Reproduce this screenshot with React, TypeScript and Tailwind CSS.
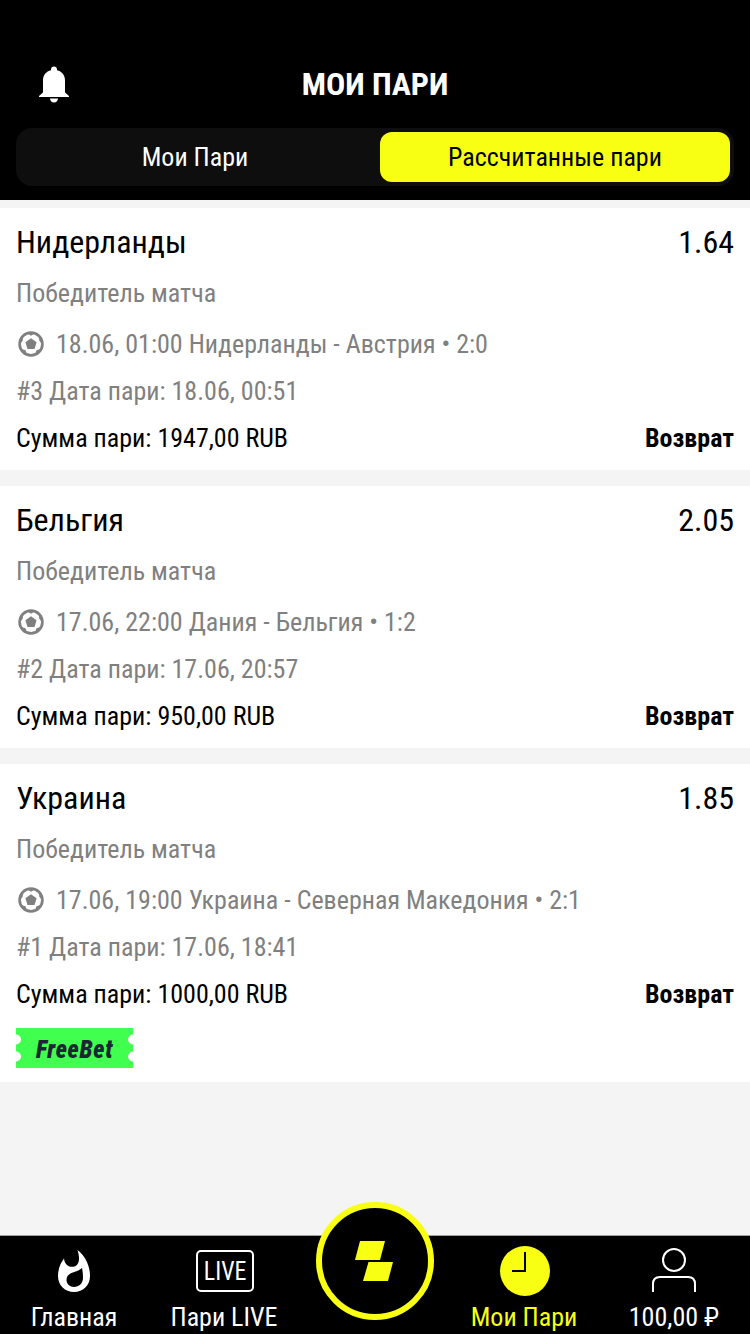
import React from "react";

type Bet = {
  id: number;
  pick: string;
  odds: string;
  event: string;
  placed: string;
  stake: string;
  freeBet?: boolean;
};

const bets: Bet[] = [
  { id: 3, pick: "Нидерланды", odds: "1.64", event: "18.06, 01:00 Нидерланды - Австрия • 2:0", placed: "18.06, 00:51", stake: "1947,00 RUB" },
  { id: 2, pick: "Бельгия", odds: "2.05", event: "17.06, 22:00 Дания - Бельгия • 1:2", placed: "17.06, 20:57", stake: "950,00 RUB" },
  { id: 1, pick: "Украина", odds: "1.85", event: "17.06, 19:00 Украина - Северная Македония • 2:1", placed: "17.06, 18:41", stake: "1000,00 RUB", freeBet: true },
];

function BellIcon() {
  return (
    <svg width="32" height="38" viewBox="0 0 32 38" fill="#fff">
      <path d="M16 .5c-1.800 0-3 1.200-3 3v.8C8 5.500 5 9.300 5 14.500v11.200c0 .6-.2 1-.6 1.300L1 30v1h30v-1l-3.400-3c-.4-.3-.6-.7-.6-1.300V14.500C27 9.300 24 5.500 19 4.300v-.8c0-1.800-1.200-3-3-3z" />
      <path d="M12 32.500h8c-.2 2.400-1.800 4-4 4s-3.800-1.600-4-4z" />
    </svg>
  );
}

function BallIcon() {
  return (
    <svg width="26" height="26" viewBox="0 0 26 26">
      <circle cx="13" cy="13" r="11.400" fill="none" stroke="#808080" strokeWidth="2.700" />
      <path d="M13 7.200l5.600 4.100-2.100 6.600H9.500L7.400 11.300z" fill="#808080" />
      <path d="M8.500 1.700L13 4.700l4.500-3zM1 13.500l3.700-3.700.5-5.300zM25 13.500l-3.700-3.700-.5-5.300zM3 18l4.500 1.300 1.800 5zM23 18l-4.500 1.300-1.800 5z" fill="#808080" />
    </svg>
  );
}

function FreeBetBadge() {
  return (
    <div className="relative h-10 w-[117px]">
      <svg className="absolute inset-0" width="117" height="40" viewBox="0 0 117 40">
        <path d="M0 0H117V6.500A5 5 0 0 0 117 16.500V23.500A5 5 0 0 0 117 33.500V40H0V33.500A5 5 0 0 0 0 23.500V16.500A5 5 0 0 0 0 6.500Z" fill="#41ff4e" />
      </svg>
      <span className="relative flex h-10 w-[117px] scale-x-[0.92] items-center justify-center pt-[2px] text-[26px] font-black italic tracking-[0.7px] text-[#1d2733]">
        FreeBet
      </span>
    </div>
  );
}

function BetCard({ bet }: { bet: Bet }) {
  return (
    <article className={`bg-white px-4 pt-[11px] text-[26px] text-[#808080] ${bet.freeBet ? "pb-[14px]" : "pb-[7px]"}`}>
      <div className="flex h-12 items-center justify-between pb-[2px] text-[32px] text-black">
        <h2>{bet.pick}</h2>
        <span>{bet.odds}</span>
      </div>
      <p className="flex h-[52px] items-center">Победитель матча</p>
      <div className="flex h-[50px] items-center gap-3 pl-[2px]">
        <BallIcon />
        <span>{bet.event}</span>
      </div>
      <p className="flex h-11 items-center">{`#${bet.id} Дата пари: ${bet.placed}`}</p>
      <div className="flex h-[50px] items-center justify-between text-black">
        <span>{`Сумма пари: ${bet.stake}`}</span>
        <strong className="font-bold">Возврат</strong>
      </div>
      {bet.freeBet && (
        <div className="pt-[9px]">
          <FreeBetBadge />
        </div>
      )}
    </article>
  );
}

function NavItem({ icon, label, active }: { icon: React.ReactNode; label: string; active?: boolean }) {
  return (
    <div className={`flex w-[150px] flex-col items-center ${active ? "text-[#f9ff13]" : "text-white"}`}>
      <div className="flex h-[60px] items-center pt-[10px]">{icon}</div>
      <span className="flex h-[38px] items-end pr-[2px] pb-1 text-[26px]">{label}</span>
    </div>
  );
}

export default function App() {
  return (
    <div className="flex h-[1334px] w-[750px] flex-col overflow-hidden whitespace-nowrap bg-[#f4f4f4] font-['Roboto_Condensed',Roboto,sans-serif] leading-none [font-stretch:75%]">
      <header className="h-[200px] bg-black px-4 pt-[54px]">
        <div className="grid h-[62px] grid-cols-[100px_1fr_100px] items-center">
          <div className="pl-[22px]"><BellIcon /></div>
          <h1 className="pb-[2px] text-center text-[32px] font-bold text-white">МОИ ПАРИ</h1>
        </div>
        <div className="mt-3 flex h-[58px] rounded-2xl bg-[#0e0e0e] p-1 text-[26px]">
          <div className="flex w-[350px] items-center justify-center text-white">Мои Пари</div>
          <div className="ml-[10px] flex w-[350px] items-center justify-center rounded-xl bg-[#f9ff13] text-black">Рассчитанные пари</div>
        </div>
      </header>
      <main className="flex flex-1 flex-col gap-4 pt-2">
        {bets.map((bet) => <BetCard key={bet.id} bet={bet} />)}
      </main>
      <nav className="flex h-[99px] shrink-0 border-t border-[#a0a0a0] bg-black">
        <NavItem label="Главная" icon={
          <svg className="mr-[2px]" width="34" height="44" viewBox="0 0 34 44">
            <path d="M20.500 1C28 7 33 16 33 27 33 36.500 26 43 17 43S1 36.500 1 27C1 20 3.500 14 7 9.500 7.500 14.500 10.500 17.800 15 17.800c5 0 7.300-3.800 7-9.300-.1-2.500-.7-5-1.500-7.500zM25 19c-5 5-15.500 3.500-15.500 12 0 4 3.500 7 7.500 7 5 0 9-3.500 9-9.500 0-3.500-.4-6.500-1-9.500z" fill="#fff" fillRule="evenodd" />
          </svg>
        } />
        <NavItem label="Пари LIVE" icon={
          <div className="flex h-[42px] w-[58px] items-center justify-center rounded-[5px] border-2 border-white text-[26px]">
            <span className="scale-x-[0.92]">LIVE</span>
          </div>
        } />
        <div className="flex w-[150px] justify-center">
          <div className="-mt-[34px] flex size-[118px] items-center justify-center rounded-full border-[6px] border-[#f9ff13] bg-black pr-[2px]">
            <svg width="38" height="40" viewBox="0 0 38 40" fill="#f9ff13">
              <path d="M5 0H30L25 19H0zM13.500 21H38L33 40H8z" />
            </svg>
          </div>
        </div>
        <NavItem active label="Мои Пари" icon={
          <svg width="50" height="50" viewBox="0 0 50 50">
            <circle cx="25" cy="25" r="25" fill="#f9ff13" />
            <path d="M25 6V25H12" fill="none" stroke="#000" strokeWidth="2" />
          </svg>
        } />
        <NavItem label="100,00 ₽" icon={
          <svg className="-mt-[2px] mr-[2px]" width="46" height="46" viewBox="0 0 46 46" fill="none" stroke="#fff" strokeWidth="2">
            <circle cx="23" cy="13" r="11" />
            <path d="M2 45V37Q2 30 9 30H37Q44 30 44 37V45" />
          </svg>
        } />
      </nav>
    </div>
  );
}
